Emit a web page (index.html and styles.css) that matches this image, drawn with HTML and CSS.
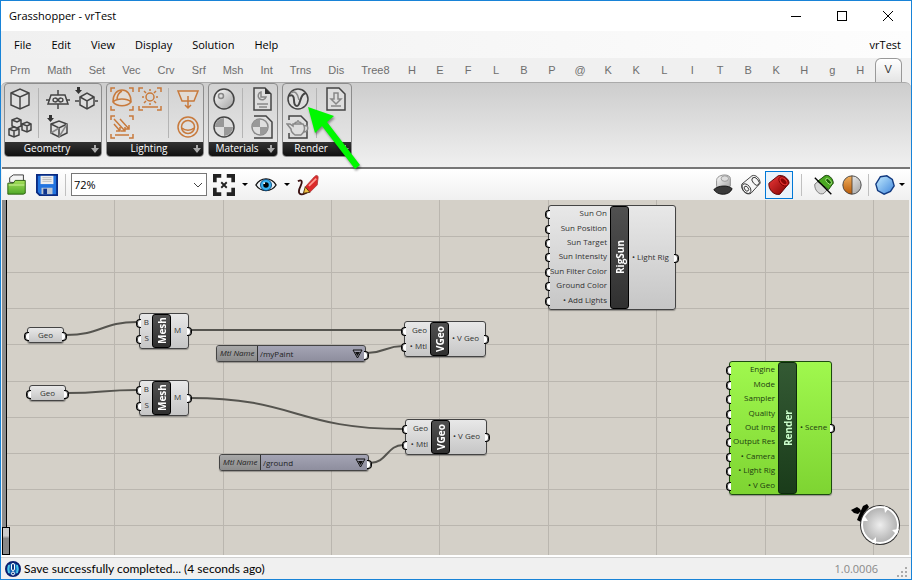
FILE: index.html
```html
<!DOCTYPE html>
<html lang="en">
<head>
    <meta charset="UTF-8">
    <meta name="viewport" content="width=device-width, initial-scale=1.0">
    <title>Grasshopper - vrTest</title>
    <link rel="stylesheet" href="styles.css">
</head>
<body>
<div class="window">
    <header class="titlebar">
        <span class="title">Grasshopper - vrTest</span>
        <button class="win-btn" aria-label="Minimize"><svg width="12" height="12"><path d="M1 6.500h10" stroke="#000" /></svg></button>
        <button class="win-btn" aria-label="Maximize"><svg width="12" height="12"><rect x="1.500" y="1.500" width="9" height="9" fill="none" stroke="#000" /></svg></button>
        <button class="win-btn" aria-label="Close"><svg width="12" height="12"><path d="M1 1l10 10M11 1L1 11" stroke="#000" /></svg></button>
    </header>

    <nav class="menubar">
        <button>File</button>
        <button>Edit</button>
        <button>View</button>
        <button>Display</button>
        <button>Solution</button>
        <button>Help</button>
        <button class="doc-name">vrTest</button>
    </nav>

    <nav class="tabs">
        <button>Prm</button>
        <button>Math</button>
        <button>Set</button>
        <button>Vec</button>
        <button>Crv</button>
        <button>Srf</button>
        <button>Msh</button>
        <button>Int</button>
        <button>Trns</button>
        <button>Dis</button>
        <button>Tree8</button>
        <button>H</button>
        <button>E</button>
        <button>F</button>
        <button>L</button>
        <button>B</button>
        <button>P</button>
        <button>@</button>
        <button>K</button>
        <button>K</button>
        <button>L</button>
        <button>I</button>
        <button>T</button>
        <button>B</button>
        <button>K</button>
        <button>H</button>
        <button>g</button>
        <button>H</button>
        <button class="active">V</button>
    </nav>

    <div class="ribbon">
        <section class="group">
            <div class="tools wide-right">
                <button aria-label="Box"><svg viewBox="0 0 24 24"><path class="face" d="M3 6l9-4 9 4v12l-9 4-9-4z" /><path d="M3 6l9 4 9-4M12 10v12" /></svg></button>
                <button aria-label="Plane"><svg viewBox="0 0 24 24"><path class="face" d="M5 8h14l3 9H2z" /><path d="M12 3v5M12 17v5M0 13h4M20 13h4" /><path d="M12 13c-2-3-5-2-5 0s3 3 5 0 5-2 5 0-3 3-5 0" /></svg></button>
                <button aria-label="Add box"><svg viewBox="0 0 24 24"><path class="solid" d="M3 0h3v3h2L4.500 7 1 3h2z" /><path class="face" d="M6 10l7-4 7 4v8l-7 4-7-4z" /><path d="M6 10l7 4 7-4M13 14v8M1 14h4M21 14h3" /></svg></button>
                <button aria-label="Boxes"><svg viewBox="0 0 24 24"><path class="face" d="M4 5l5-2 4 2v6l-4 2-5-2zM14 9l5-2 4 2v6l-4 2-5-2z" /><path class="face" d="M1 14l5-2 5 2v6l-5 2-5-2z" /><path d="M1 14l5 2 5-2M6 16v6M14 9l5 2 4-2M19 11v5M4 5l5 2 4-2" /></svg></button>
                <button aria-label="Mesh box"><svg viewBox="0 0 24 24"><path class="solid" d="M3 0h3v3h2L4.500 7 1 3h2z" /><path class="face" d="M5 9l8-3 8 3v9l-8 4-8-4z" /><path d="M5 9l8 4 8-4M13 13v9" /><path class="soft" d="M5 18l8-5M13 22l8-13" /></svg></button>
            </div>
            <h2>Geometry <svg width="8" height="8"><path d="M3 0h2v3h3L4 8 0 3h3z" /></svg></h2>
        </section>
        <section class="group">
            <div class="tools wide-left orange">
                <button aria-label="Dome light"><svg viewBox="0 0 24 24"><path d="M1 5V1h4M19 1h4v4M1 19v4h4M19 23h4v-4" /><path class="face" d="M3 15C3 7 7 3 12 3s9 4 9 12c-4 5-14 5-18 0z" /><path d="M3 15c4-4 14-4 18 0M7 13c0-4 1-7 5-9" /></svg></button>
                <button aria-label="Sun"><svg viewBox="0 0 24 24"><path d="M1 5V1h4M19 1h4v4M1 19v4h4M19 23h4v-4M4 20h16" /><circle cx="12" cy="10" r="4" /><path d="M12 2v2M12 16v2M4 10h2M18 10h2M6 4l2 2M16 14l2 2M6 16l2-2M16 6l2-2" /></svg></button>
                <button aria-label="Spot light"><svg viewBox="0 0 24 24"><path class="face" d="M2 4h20l-4 10H6z" /><path d="M12 9v12M9 18l3 3 3-3" /></svg></button>
                <button aria-label="Direct light"><svg viewBox="0 0 24 24"><path d="M1 5V1h4M19 1h4v4M1 19v4h4M19 23h4v-4M5 20h14" /><path d="M4 4l11 12M10 4l9 10M4 9l6 7M11 16h4v-4M15 14h4v-4M6 16h4v-4" /></svg></button>
                <button aria-label="Light ring"><svg viewBox="0 0 24 24"><circle cx="12" cy="12" r="10" /><circle cx="12" cy="12" r="6.500" /><path d="M6 13c3 3 9 3 12 0" /></svg></button>
            </div>
            <h2>Lighting <svg width="8" height="8"><path d="M3 0h2v3h3L4 8 0 3h3z" /></svg></h2>
        </section>
        <section class="group">
            <div class="tools">
                <button aria-label="Material"><svg viewBox="0 0 24 24"><circle class="ball" cx="12" cy="12" r="10" /><circle class="soft" cx="9" cy="9" r="2.500" /></svg></button>
                <button aria-label="Load material"><svg viewBox="0 0 24 24"><path class="face" d="M4 1h11l6 6v16H4z" /><path class="solid" d="M15 1v6h6z" /><path class="soft" d="M11 5a4 4 0 1 0 5 5h-5zM7 17h11M9 20h8" /></svg></button>
                <button aria-label="Checker"><svg viewBox="0 0 24 24"><circle class="face" cx="12" cy="12" r="10" /><path class="shade" d="M12 3v9H3a9 9 0 0 1 9-9zM12 21v-9h9a9 9 0 0 1-9 9z" /></svg></button>
                <button aria-label="Checker file"><svg viewBox="0 0 24 24"><path class="face" d="M4 1h12l6 6v16H4" /><circle class="face soft" cx="10" cy="12" r="8" /><path class="shade" d="M10 4v8H2a8 8 0 0 1 8-8zM10 20v-8h8a8 8 0 0 1-8 8z" /></svg></button>
            </div>
            <h2>Materials <svg width="8" height="8"><path d="M3 0h2v3h3L4 8 0 3h3z" /></svg></h2>
        </section>
        <section class="group">
            <div class="tools">
                <button aria-label="Render"><svg viewBox="0 0 24 24"><circle class="face" cx="12" cy="12" r="10" /><path class="soft" d="M5 6c4-3 7 1 8 7" /><path class="thick" d="M3 9c3-2 5 0 5 4 0 3 1 6 3 6 4 0 2-12 9-13" /></svg></button>
                <button aria-label="Export"><svg viewBox="0 0 24 24"><path class="face" d="M3 1h12l6 6v16H3z" /><path class="soft" d="M10 6h4v6h3l-5 5-5-5h3zM7 19h10" /></svg></button>
                <button aria-label="Teapot"><svg viewBox="0 0 24 24"><path class="face" d="M3 5V1h12l6 6v16H3v-5" /><path class="face soft" d="M7 9h10c3 4 1 9-2 11H9c-3-2-4-4-4-6L1 9h3l3 2zM8 9c2-3 6-3 8 0M12 6V5M18 11c5-2 5 5 0 6" /></svg></button>
            </div>
            <h2>Render <svg width="8" height="8"><path d="M3 0h2v3h3L4 8 0 3h3z" /></svg></h2>
        </section>
        <svg class="pointer" width="64" height="70" aria-hidden="true">
            <path d="M5 4l26 9-7 6 33 43-5 4-33-43-7 7z" />
        </svg>
    </div>

    <div class="toolbar">
        <button aria-label="Open"><svg viewBox="0 0 24 24"><path d="M4 9V4l4-3h11v9z" fill="#f4f4f4" stroke="#333" /><path d="M2 10h6l2-3h11v14l-2 1H2z" fill="url(#green)" stroke="#275c0c" /><path d="M3 12h17" stroke="#d4f4a0" /></svg></button>
        <button class="save" aria-label="Save"><svg viewBox="0 0 24 24"><path d="M1 1h22v22H4l-3-3z" fill="#2274e0" stroke="#0a2a80" stroke-width="2" /><path d="M5 2h14v9H5z" fill="#eee" /><path d="M7 4h10M7 6h10M7 8h10" stroke="#bbb" /><path d="M6 15h12v7H6z" fill="#bcc4d0" /><path d="M8 16h4v6H8z" fill="#10358c" /></svg></button>
        <i class="sep"></i>
        <label class="zoom">
            <select aria-label="Zoom level">
                <option>72%</option>
                <option>100%</option>
                <option>150%</option>
            </select>
            <svg width="10" height="6"><path d="M1 1l4 4 4-4" fill="none" stroke="#444" /></svg>
        </label>
        <button aria-label="Zoom extents"><svg viewBox="0 0 24 24"><path d="M2 9V2h7M15 2h7v7M22 15v7h-7M9 22H2v-7" fill="none" stroke="#222" stroke-width="4" /><path d="M9 9l6 6M15 9l-6 6" stroke="#222" stroke-width="2" /></svg></button>
        <button class="drop" aria-label="Zoom menu"></button>
        <button aria-label="Preview"><svg viewBox="0 0 24 24"><path d="M1 12C6 3 18 3 23 12 18 20 6 20 1 12z" fill="#eef4f8" stroke="#111" stroke-width="1.500" /><circle cx="12" cy="12" r="6" fill="#39b4f0" stroke="#0a4a80" /><circle cx="12" cy="12" r="3" fill="#000" /><circle cx="10" cy="10" r="1" fill="#fff" /></svg></button>
        <button class="drop" aria-label="Preview menu"></button>
        <button aria-label="Sketch"><svg viewBox="0 0 24 24"><path d="M1 8c5-3 5 1 3 5s-3 8 0 9 4-1 7-2" fill="none" stroke="#3a1010" stroke-width="2" /><path d="M9 14L19 3c2-2 4-2 4 1l-1 8-8 8z" fill="#dc2a2a" stroke="#b04040" /><path d="M13 13l8-8" stroke="#ff9a90" stroke-width="2" /><path d="M9 14l5 6-7 1z" fill="#f0c040" stroke="#503008" /></svg></button>
        <span class="spacer"></span>
        <button aria-label="No preview"><svg viewBox="0 0 24 24"><path d="M5 7c0-7 15-8 15-2v8c-3 5-14 5-15 0z" fill="url(#steel)" stroke="#888" /><ellipse cx="14" cy="5" rx="4" ry="3" fill="#ddd" stroke="#999" /><path d="M2 17c5-5 16-5 20-1-3 8-16 8-20 1z" fill="#3a3a3a" stroke="#111" /></svg></button>
        <button aria-label="Wireframe preview"><svg viewBox="0 0 24 24"><g fill="none" stroke="#333"><path d="M2 11L13 2c4-2 9 3 9 8L12 21C7 24 1 17 2 11z" fill="#f6f6f6" /><ellipse cx="7" cy="16" rx="4" ry="6" transform="rotate(-40 7 16)" /><ellipse cx="7" cy="16" rx="2" ry="3" transform="rotate(-40 7 16)" /><ellipse cx="17" cy="8" rx="3" ry="5" transform="rotate(-40 17 8)" /></g></svg></button>
        <button class="selected" aria-label="Shaded preview"><svg viewBox="0 0 24 24"><path d="M1 10L11 2c5-2 12 3 12 8L13 22C7 24 0 17 1 10z" fill="url(#red)" stroke="#500" /><ellipse cx="17" cy="8" rx="4" ry="6" transform="rotate(-45 17 8)" fill="#e03030" stroke="#700" /><ellipse cx="17" cy="8" rx="2" ry="4" transform="rotate(-45 17 8)" fill="#8a0606" /></svg></button>
        <i class="sep wide"></i>
        <button aria-label="Selected only"><svg viewBox="0 0 24 24"><path d="M2 11L13 2c4-2 9 3 9 8L12 21C7 24 1 17 2 11z" fill="#d8d8d8" stroke="#777" /><path d="M5 8l8-6c4-2 9 3 9 8l-5 7z" fill="#4aa822" stroke="#184c08" /><ellipse cx="17" cy="8" rx="2" ry="4" transform="rotate(-45 17 8)" fill="#1c6008" stroke="#a8e880" /><path d="M2 4l18 18" stroke="#000" stroke-width="1.500" /></svg></button>
        <button aria-label="Split preview"><svg viewBox="0 0 24 24"><circle cx="12" cy="12" r="10" fill="url(#steel)" /><path d="M12 2a10 10 0 0 0 0 20z" fill="url(#orange)" /><circle cx="12" cy="12" r="10" fill="none" stroke="#444" /><path d="M12 2v20" stroke="#543" /></svg></button>
        <i class="sep narrow"></i>
        <button aria-label="Mesh quality"><svg viewBox="0 0 24 24"><path d="M7 3l7-1 6 4 2 7-4 6-7 3-7-4-2-7z" fill="url(#blue)" stroke="#123a80" stroke-width="1.500" /></svg></button>
        <button class="drop close" aria-label="Mesh quality menu"></button>
    </div>

    <main class="canvas">
        <svg class="wires" width="100%" height="100%" aria-hidden="true">
            <defs>
                <linearGradient id="green" x2="0" y2="1"><stop stop-color="#a6e05a" /><stop offset="1" stop-color="#4fa828" /></linearGradient>
                <linearGradient id="red" x2="1" y2="1"><stop stop-color="#f03a3a" /><stop offset="1" stop-color="#7c0000" /></linearGradient>
                <linearGradient id="steel" x2="1" y2="1"><stop stop-color="#fff" /><stop offset="1" stop-color="#a0a0a0" /></linearGradient>
                <linearGradient id="orange" x2="0" y2="1"><stop stop-color="#f0b060" /><stop offset="1" stop-color="#b85a08" /></linearGradient>
                <linearGradient id="blue" x2="1" y2="1"><stop stop-color="#c4ecff" /><stop offset="1" stop-color="#3f86dc" /></linearGradient>
                <radialGradient id="dial"><stop stop-color="#eee" /><stop offset="1" stop-color="#b4b4b4" /></radialGradient>
            </defs>
            <g class="grid">
                <path d="M112 0v900M221 0v900M329 0v900M437 0v900M546 0v900M654 0v900M763 0v900M871 0v900" />
                <path d="M0 36h2000M0 72h2000M0 108h2000M0 144h2000M0 181h2000M0 217h2000M0 253h2000M0 289h2000M0 325h2000" />
            </g>
            <g class="wire">
                <path d="M64 135C99 135 100 122 135 122" />
                <path d="M66 193C100 193 101 190 135 190" />
                <path d="M188 130H401" />
                <path d="M188 198C294 198 294 229 401 229" />
                <path d="M365 153C383 153 383 146 401 146" />
                <path d="M368 263C385 263 385 245 401 245" />
            </g>
        </svg>

        <div class="gutter"></div>
        <div class="gutter-handle"></div>

        <div class="node param geo-a"><span class="port in out">Geo</span></div>
        <div class="node param geo-b"><span class="port in out">Geo</span></div>

        <div class="node mesh mesh-a">
            <div class="inputs"><span class="port in">B</span><span class="port in">S</span></div>
            <b>Mesh</b>
            <div class="outputs"><span class="port out">M</span></div>
        </div>
        <div class="node mesh mesh-b">
            <div class="inputs"><span class="port in">B</span><span class="port in">S</span></div>
            <b>Mesh</b>
            <div class="outputs"><span class="port out">M</span></div>
        </div>

        <div class="node value value-a">
            <label for="mtl-a">Mtl Name</label>
            <span class="port out"><select id="mtl-a"><option>/myPaint</option></select>
            <svg width="11" height="10"><path d="M1 1h9L5.500 9z" fill="none" stroke="#111" /><path d="M3 3h5L5.500 7z" fill="#111" /></svg></span>
        </div>
        <div class="node value value-b">
            <label for="mtl-b">Mtl Name</label>
            <span class="port out"><select id="mtl-b"><option>/ground</option></select>
            <svg width="11" height="10"><path d="M1 1h9L5.500 9z" fill="none" stroke="#111" /><path d="M3 3h5L5.500 7z" fill="#111" /></svg></span>
        </div>

        <div class="node vgeo vgeo-a">
            <div class="inputs"><span class="port in">Geo</span><span class="port in">• Mtl</span></div>
            <b>VGeo</b>
            <div class="outputs"><span class="port out">• V Geo</span></div>
        </div>
        <div class="node vgeo vgeo-b">
            <div class="inputs"><span class="port in">Geo</span><span class="port in">• Mtl</span></div>
            <b>VGeo</b>
            <div class="outputs"><span class="port out">• V Geo</span></div>
        </div>

        <div class="node rigsun">
            <div class="inputs">
                <span class="port in">Sun On</span>
                <span class="port in">Sun Position</span>
                <span class="port in">Sun Target</span>
                <span class="port in">Sun Intensity</span>
                <span class="port in">Sun Filter Color</span>
                <span class="port in">Ground Color</span>
                <span class="port in">• Add Lights</span>
            </div>
            <b>RigSun</b>
            <div class="outputs"><span class="port out">• Light Rig</span></div>
        </div>

        <div class="node render">
            <div class="inputs">
                <span class="port in">Engine</span>
                <span class="port in">Mode</span>
                <span class="port in">Sampler</span>
                <span class="port in">Quality</span>
                <span class="port in">Out Img</span>
                <span class="port in">Output Res</span>
                <span class="port in">• Camera</span>
                <span class="port in">• Light Rig</span>
                <span class="port in">• V Geo</span>
            </div>
            <b>Render</b>
            <div class="outputs"><span class="port out">• Scene</span></div>
        </div>

        <svg class="compass" width="52" height="46" aria-hidden="true">
            <path d="M1 10l6-3 3 2 1 2-3 3-4-1zM13 6l4-2 2 3-5 6-3 9-4-2 2-5z" fill="#000" />
            <circle cx="30" cy="25" r="20" fill="#333" />
            <circle cx="30" cy="25" r="19" fill="#fff" />
            <circle cx="30" cy="25" r="17" fill="url(#dial)" />
            <path d="M34 6l5 2-4 5zM49 29l-2 6-5-5zM26 44l-5-2 5-5zM12 21l2-6 4 6z" fill="#fff" />
        </svg>
    </main>

    <footer class="status">
        <svg width="16" height="16" viewBox="0 0 16 16"><circle cx="8" cy="8" r="7" fill="#1464b4" stroke="#0a1f70" stroke-width="2" /><path d="M4 4c-1 3-1 5 0 8M12 4c1 3 1 5 0 8" fill="none" stroke="#4cc8e8" stroke-width="2" /><rect x="6.500" y="2.500" width="3" height="7" rx="1.500" fill="#123a80" stroke="#fff" /><circle cx="8" cy="12.500" r="1.500" fill="#123a80" stroke="#fff" /></svg>
        <span class="message">Save successfully completed... (4 seconds ago)</span>
        <span class="version">1.0.0006</span>
        <svg class="grip" width="12" height="12"><path d="M8 0h2v2H8zM4 4h2v2H4zM8 4h2v2H8zM0 8h2v2H0zM4 8h2v2H4zM8 8h2v2H8z" fill="#aaa" /></svg>
    </footer>
</div>
</body>
</html>
```
FILE: styles.css
```css
* { box-sizing: border-box; }
body { margin: 0; font: 11px/16px "Open Sans", "Noto Sans", sans-serif; color: #000; }
button { font: inherit; color: inherit; border: 0; background: none; padding: 0; margin: 0; }
svg { display: block; }

.window { display: flex; flex-direction: column; min-height: 100vh; border: 1px solid #1883d7; background: #f0f0f0; }

.titlebar { display: flex; align-items: center; height: 30px; background: #fff; padding-left: 8px; }
.title { flex: 1; }
.win-btn { display: flex; align-items: center; justify-content: center; width: 46px; height: 30px; }

.menubar { display: flex; align-items: center; gap: 20px; height: 27px; padding: 0 10px 0 13px; background: linear-gradient(90deg, #f0f0f0, #fdfdfd); }
.doc-name { margin-left: auto; }

.tabs { display: flex; align-items: flex-end; gap: 1px; height: 24px; padding-left: 1px; font-family: "Liberation Sans", Arial, sans-serif; color: #6e6e6e; }
.tabs button { min-width: 27px; height: 24px; padding: 0 8px; text-align: center; }
.tabs .active { padding-bottom: 4px; color: #333; background: linear-gradient(#fff, #e4e4e4); border: 1px solid #999; border-bottom: 0; border-radius: 6px 6px 0 0; }

.ribbon { position: relative; display: flex; align-items: flex-start; gap: 4px; height: 85px; padding: 0 3px; border-top: 1px solid #aaa; border-radius: 6px 6px 0 0; background: linear-gradient(#cdcdcd, #f0f0f0); }
.group { border: 1px solid #8c8c8c; border-radius: 4px; background: linear-gradient(#d2d2d2, #e8e8e8); overflow: hidden; }
.tools { display: grid; grid-template-columns: 28px 28px; grid-auto-rows: 28px; column-gap: 10px; padding: 1px; background: linear-gradient(#b4b4b4, #b4b4b4) 33px 4px / 1px 50px no-repeat; }
.wide-right { grid-template-columns: 38px 28px 28px; column-gap: 0; }
.wide-left { grid-template-columns: 28px 38px 28px; column-gap: 0; background-position: 61px 4px; }
.tools button { display: flex; align-items: center; justify-content: center; width: 28px; height: 28px; }
.tools svg { width: 24px; height: 24px; fill: none; stroke: #444; stroke-width: 1.5; }
.tools.orange svg { stroke: #c87a3c; }
.tools.orange button:nth-child(3) { margin-left: 0; }
.tools.orange button:nth-child(4) { grid-column: 1; }
.tools.orange button:nth-child(5) { grid-column: 3; }
.tools .face { fill: #dedede; }
.tools.orange .face { fill: #e2dcd6; }
.tools .soft { stroke: #888; }
.tools .thick { stroke-width: 2; }
.tools .shade { fill: #999; stroke: none; }
.tools .ball { fill: url(#steel); }
.tools .solid { fill: #333; stroke: none; }
.group h2 { position: relative; margin: 0; padding-right: 12px; height: 14px; text-align: center; font-size: 10px; line-height: 13px; font-weight: 400; color: #fff; background: linear-gradient(#333, #111); }
.group h2 svg { position: absolute; right: 2px; top: 3px; fill: #aaa; }
.pointer { position: absolute; left: 302px; top: 20px; fill: #00f800; filter: drop-shadow(1px 2px 1px rgba(0, 0, 0, 0.4)); }

.toolbar { display: flex; align-items: center; height: 33px; margin: 0 1px; padding: 0 1px; border-top: 2px solid #777; background: linear-gradient(#fff, #f0f0f0); }
.toolbar button { display: flex; align-items: center; justify-content: center; flex: none; width: 28px; height: 28px; }
.toolbar button svg { width: 22px; height: 22px; }
.toolbar .save { margin-left: 2px; }
.toolbar .selected { border: 1px solid #0078d7; background: #eaf3fb; }
.toolbar .drop { width: 14px; }
.toolbar .close { margin-left: -4px; }
.drop::before { content: ""; border: 3px solid transparent; border-top-color: #000; border-bottom: 0; }
.sep { flex: none; width: 1px; height: 22px; margin: 0 5px 0 4px; background: #c0c0c0; }
.sep.wide { margin: 0 8px; }
.sep.narrow { margin: 0 2px; }
.zoom { position: relative; width: 136px; margin-right: 3px; }
.zoom select { display: block; appearance: none; width: 100%; height: 23px; padding: 0 2px; border: 1px solid #777; border-radius: 0; background: #fff; font: inherit; color: #000; }
.zoom svg { position: absolute; right: 4px; top: 9px; }
.spacer { flex: 1; }

.canvas { position: relative; flex: 1; margin: 0 2px 0 1px; background: #d4d0c8; overflow: hidden; font-size: 8px; line-height: 10px; color: #333; }
.wires { position: absolute; left: 0; top: 0; }
.grid { fill: none; stroke: #bab6af; shape-rendering: crispEdges; }
.wire { fill: none; stroke: #55544f; stroke-width: 2; }
.gutter { position: absolute; left: 0; top: 0; bottom: 0; width: 5px; background: #8c8c8c; border-right: 1px solid #000; }
.gutter-handle { position: absolute; left: 0; bottom: 0; width: 8px; height: 28px; border: 1px solid #000; background: linear-gradient(#ccc 30%, #888 40%); }

.node { position: absolute; display: flex; border: 1px solid #444; border-radius: 3px; background: linear-gradient(#e8e8e8, #c6c6c6); box-shadow: 0 1px 1px rgba(0, 0, 0, 0.3); white-space: nowrap; }
.node b { display: flex; align-items: center; justify-content: center; flex: none; width: 19px; border: 1px solid #000; border-radius: 3px; background: linear-gradient(#303030, #505050); color: #fff; font-size: 10px; line-height: 16px; writing-mode: vertical-rl; transform: rotate(180deg); }
.inputs, .outputs { display: flex; flex-direction: column; padding-bottom: 2px; }
.inputs { text-align: right; }
.outputs { flex: 1; }
.port { position: relative; display: flex; flex: 1; align-items: center; justify-content: flex-end; }
.inputs .port { padding-right: 3px; }
.outputs .port { justify-content: flex-start; padding-left: 3px; }
.port.in::before, .port.out::after { content: ""; position: absolute; top: 50%; width: 4px; height: 7px; margin-top: -3px; background: #fff; border: 1px solid #000; }
.port.in::before { left: -4px; border-right: 0; border-radius: 4px 0 0 4px; box-shadow: inset 1px 0 #444; }
.port.out::after { right: -4px; border-left: 0; border-radius: 0 4px 4px 0; box-shadow: inset -1px 0 #444; }

.param { width: 37px; height: 16px; }
.param .port { justify-content: center; margin-bottom: 1px; }
.geo-a { left: 25px; top: 127px; }
.geo-b { left: 27px; top: 185px; }
.mesh { width: 50px; height: 36px; }
.mesh .inputs { width: 12px; }
.mesh-a { left: 137px; top: 113px; }
.mesh-b { left: 137px; top: 180px; }
.vgeo { width: 82px; height: 36px; }
.vgeo .inputs { width: 25px; }
.vgeo-a { left: 402px; top: 121px; }
.vgeo-b { left: 403px; top: 219px; }
.rigsun { left: 546px; top: 5px; width: 128px; height: 105px; }
.rigsun .inputs { width: 61px; }
.render { left: 727px; top: 161px; width: 103px; height: 134px; border-color: #1c4a10; background: linear-gradient(#a0f84e, #7ed432); color: #1d3d10; }
.render .inputs { width: 48px; }
.render b { border-color: #0c2a0c; background: linear-gradient(#1a3c1a, #345a34); color: #cfc; }

.value { width: 150px; height: 17px; background: linear-gradient(#a4a4b4, #8e8e9e); }
.value label { width: 41px; padding-left: 3px; border-right: 1px solid #333; border-radius: 2px 0 0 2px; background: linear-gradient(#a8a8a8, #8c8c8c); font-style: italic; line-height: 14px; color: #222; }
.value .port { padding-right: 2px; }
.value select { appearance: none; flex: 1; border: 0; padding: 0 2px; background: none; font: inherit; color: #222; }
.value-a { left: 214px; top: 145px; }
.value-b { left: 217px; top: 254px; }

.compass { position: absolute; right: 7px; bottom: 9px; }

.status { display: flex; align-items: center; height: 24px; padding: 2px 2px 0 4px; gap: 3px; border-top: 2px solid #fff; box-shadow: inset 0 1px #d0d0d0; }
.message { font-family: Lato, sans-serif; font-size: 12px; }
.version { margin-left: auto; margin-right: 16px; color: #888; }
.grip { align-self: flex-end; }
```
